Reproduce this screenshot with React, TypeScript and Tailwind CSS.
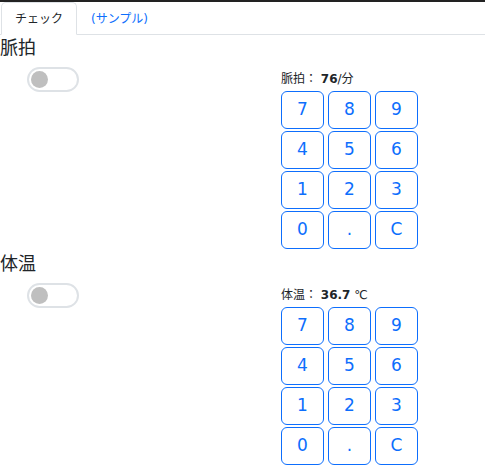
import { useState } from 'react'

const KEYS = ['7', '8', '9', '4', '5', '6', '1', '2', '3', '0', '.', 'C']

function Toggle() {
  const [on, setOn] = useState(false)
  return (
    <button
      type="button"
      onClick={() => setOn(v => !v)}
      className={`ml-[27px] mt-[7px] w-[52px] h-[25px] rounded-full border-2 flex items-center px-[2px] ${
        on ? 'border-[#0d6efd] bg-[#0d6efd] justify-end' : 'border-[#dee2e6] bg-white justify-start'
      }`}
    >
      <span className={`block w-[17px] h-[17px] rounded-full ${on ? 'bg-white' : 'bg-[#bfbfbf]'}`} />
    </button>
  )
}

function Section({ title, label, value, unit }: { title: string; label: string; value: string; unit: string }) {
  return (
    <section className="mb-[2px]">
      <h2 className="text-[18px] leading-[25px] h-[25px]">{title}</h2>
      <div className="flex">
        <div className="w-[281px] shrink-0">
          <Toggle />
        </div>
        <div className="pt-[10px]">
          <div className="text-[12px] leading-[19px] h-[21px] text-[#212529]">
            {label}： <span className="font-bold">{value}</span>{unit}
          </div>
          <div className="grid grid-cols-[43px_43px_43px] gap-x-[4px] gap-y-[2px]">
            {KEYS.map(k => (
              <button
                key={k}
                type="button"
                className="h-[38px] border border-[#0d6efd] rounded-[6px] text-[#0d6efd] text-[17px] bg-white"
              >
                {k}
              </button>
            ))}
          </div>
        </div>
      </div>
    </section>
  )
}

export default function App() {
  const [tab, setTab] = useState(0)
  return (
    <div
      className="w-[485px] h-[470px] bg-white text-[#212529] border-t-2 border-[#222] overflow-hidden"
      style={{ fontFamily: '"DejaVu Sans", "Noto Sans CJK JP", sans-serif' }}
    >
      <div className="flex border-b border-[#dee2e6] h-[33px] pl-[1px]">
        {['チェック', '(サンプル)'].map((t, i) => (
          <button
            key={t}
            type="button"
            onClick={() => setTab(i)}
            className={`px-[13px] text-[12px] h-[33px] rounded-t-[5px] border -mb-px ${
              tab === i ? 'border-[#dee2e6] border-b-white bg-white text-[#212529]' : 'border-transparent text-[#0d6efd]'
            }`}
          >
            {t}
          </button>
        ))}
      </div>
      <Section title="脈拍" label="脈拍" value="76" unit="/分" />
      <Section title="体温" label="体温" value="36.7" unit=" ℃" />
    </div>
  )
}
